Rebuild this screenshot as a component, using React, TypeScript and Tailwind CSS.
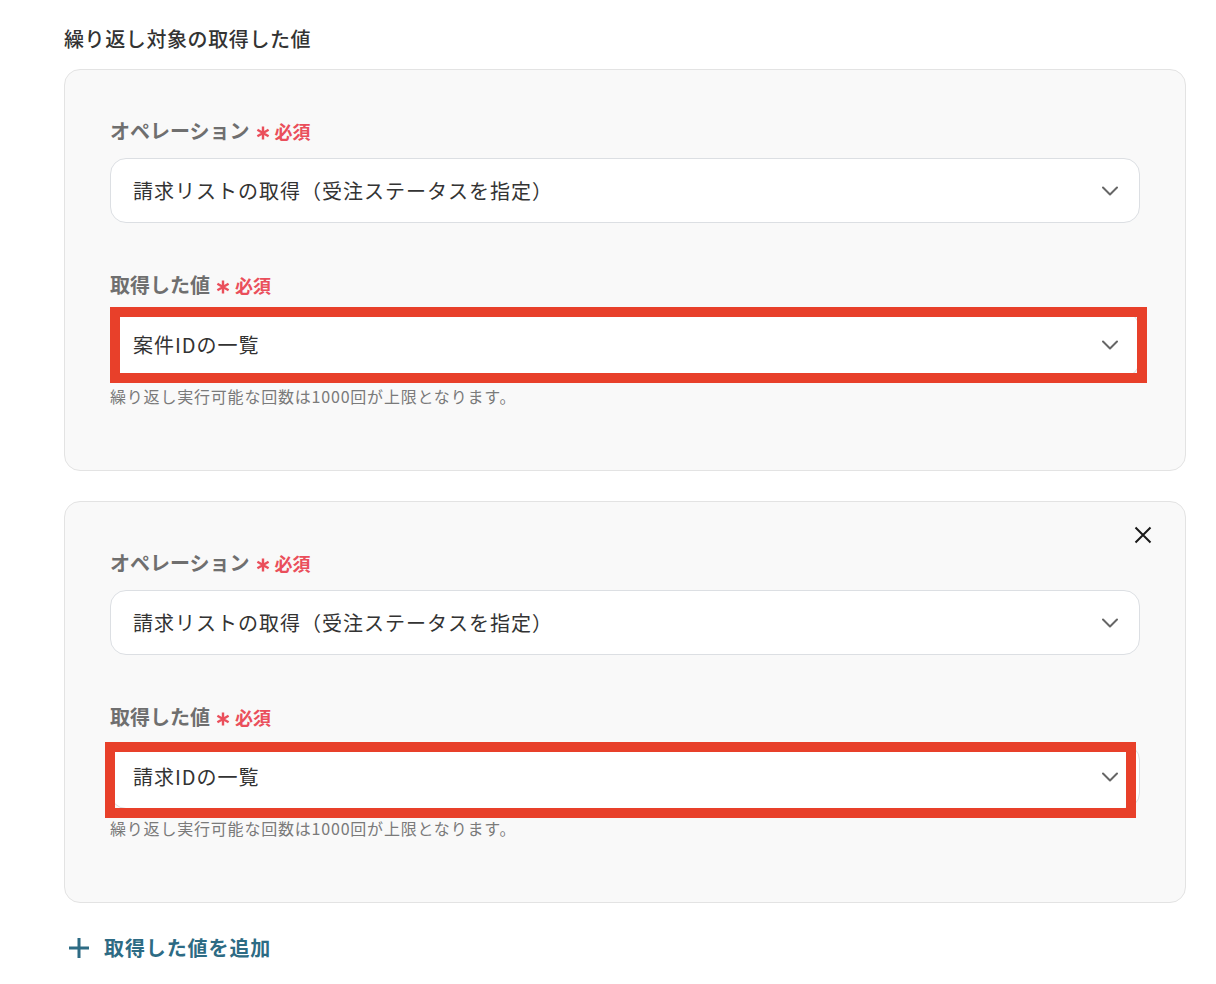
import React from 'react';

const FONT = { fontFamily: '"Noto Sans CJK JP", "Noto Sans", sans-serif' };

function Chevron() {
  return (
    <svg width="16" height="10" viewBox="0 0 16 10" fill="none" className="shrink-0">
      <polyline points="1,1.5 8,8.5 15,1.5" stroke="#666666" strokeWidth="2" strokeLinecap="round" strokeLinejoin="round" />
    </svg>
  );
}

function Required() {
  return (
    <span className="ml-[6px] flex items-center gap-[5px] text-[#ea4f5b]">
      <svg width="14" height="14" viewBox="0 0 14 14" className="translate-y-[2px]">
        <path d="M7 0.5v13M1.4 3.75l11.2 6.5M12.6 3.75 1.4 10.25" stroke="#ea4f5b" strokeWidth="2.4" />
      </svg>
      <span className="text-[18px] font-bold">必須</span>
    </span>
  );
}

function FieldLabel({ text }: { text: string }) {
  return (
    <div className="flex items-center h-[28px]">
      <span className="text-[20px] font-bold text-[#6f6f6f]">{text}</span>
      <Required />
    </div>
  );
}

function SelectBox({ value, highlight }: { value: string; highlight?: string }) {
  return (
    <div className="relative">
      <div className="flex items-center justify-between h-[65px] rounded-[16px] border border-[#dcdfe3] bg-white pl-[22px] pr-[21px]">
        <span className="text-[20px] tracking-[1px] text-[#333333]">{value}</span>
        <Chevron />
      </div>
      {highlight && <div className={highlight} />}
    </div>
  );
}

function LoopCard({
  closable,
  highlight,
  value,
}: {
  closable?: boolean;
  highlight: string;
  value: string;
}) {
  return (
    <div className="relative rounded-[16px] border border-[#e3e3e3] bg-[#f9f9f9] px-[45px] pt-[47px] pb-[64px]">
      {closable && (
        <button className="absolute right-[33px] top-[24px] p-0">
          <svg width="18" height="18" viewBox="0 0 18 18" fill="none">
            <path d="M1.5 1.5 16.5 16.5M16.5 1.5 1.5 16.5" stroke="#1a1a1a" strokeWidth="2" />
          </svg>
        </button>
      )}
      <FieldLabel text="オペレーション" />
      <div className="mt-[13px]">
        <SelectBox value="請求リストの取得（受注ステータスを指定）" />
      </div>
      <div className="mt-[48px]">
        <FieldLabel text="取得した値" />
      </div>
      <div className="mt-[13px]">
        <SelectBox value={value} highlight={highlight} />
      </div>
      <p className="mt-[9px] text-[16px] leading-[20px] tracking-[0.8px] text-[#7a7a7a]">
        繰り返し実行可能な回数は1000回が上限となります。
      </p>
    </div>
  );
}

export default function App() {
  return (
    <div className="min-h-[984px] w-[1216px] bg-white" style={FONT}>
      <div className="pl-[64px] pr-[30px] pt-[25px]">
        <h2 className="text-[20px] font-medium leading-[28px] tracking-[0.6px] text-[#333333]">繰り返し対象の取得した値</h2>
        <div className="mt-[16px] flex flex-col gap-[30px]">
          <LoopCard
            value="案件IDの一覧"
            highlight="pointer-events-none absolute left-0 right-[-7px] top-[-5px] bottom-[-6px] border-[10px] border-[#e8402a]"
          />
          <LoopCard
            closable
            value="請求IDの一覧"
            highlight="pointer-events-none absolute left-[-5px] right-[4px] top-[-2px] bottom-[-9px] border-[10px] border-[#e8402a]"
          />
        </div>
        <button className="mt-[30px] ml-[4px] flex items-center gap-[14px] text-[#2d6b84]">
          <svg width="22" height="22" viewBox="0 0 22 22" fill="none">
            <path d="M11 1v20M1 11h20" stroke="#2d6b84" strokeWidth="3" />
          </svg>
          <span className="text-[20px] font-bold tracking-[0.9px]">取得した値を追加</span>
        </button>
      </div>
    </div>
  );
}
